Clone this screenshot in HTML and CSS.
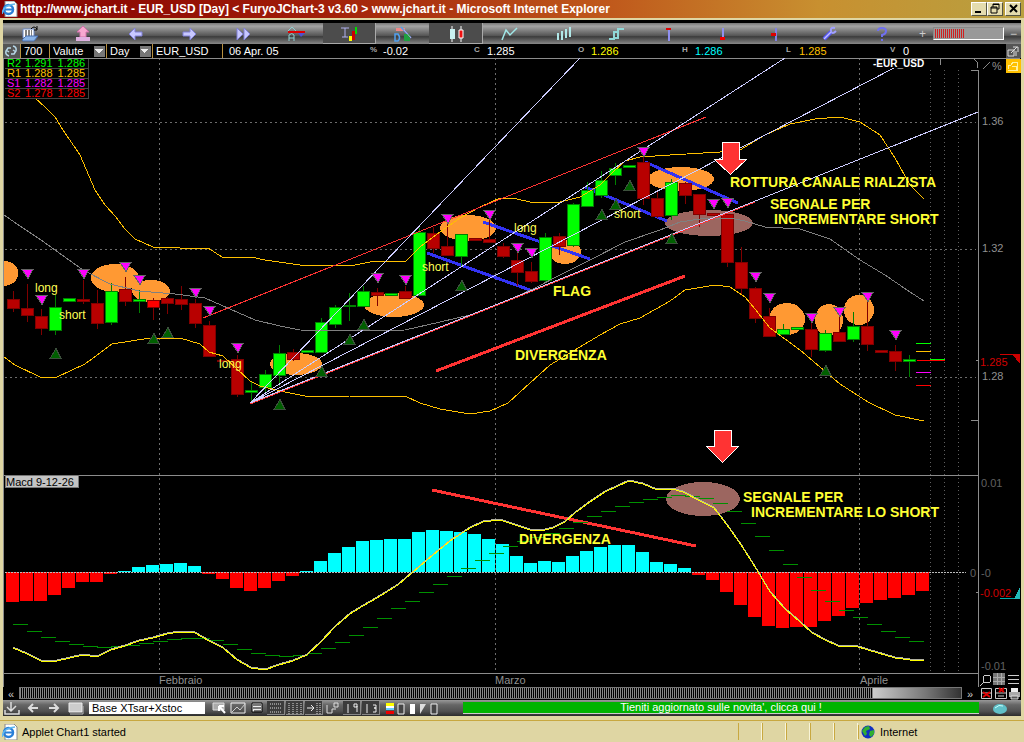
FILE: index.html
```html
<!DOCTYPE html>
<html lang="it">
<head>
    <meta charset="UTF-8">
    <meta name="viewport" content="width=device-width, initial-scale=1.0">
    <title>FuryoJChart-3</title>
    <link rel="stylesheet" href="styles.css">
</head>
<body>
    <header class="titlebar">
        <svg class="ie" viewBox="0 0 16 16"><path d="M3 0h9l3 3v13H3z" fill="#fff" stroke="#888"/><circle cx="6.500" cy="8.500" r="4.500" fill="none" stroke="#2a7fd8" stroke-width="2.500"/><path d="M3 8.500h8" stroke="#2a7fd8" stroke-width="2"/><path d="M0 13Q1 4 13 3" fill="none" stroke="#60b8f0" stroke-width="1.500"/></svg>
        <h1>http://www.jchart.it - EUR_USD [Day] &lt; FuryoJChart-3 v3.60 &gt; www.jchart.it - Microsoft Internet Explorer</h1>
        <div class="winbtns">
            <button aria-label="Riduci"><svg viewBox="0 0 14 12"><path d="M3 9h6" stroke="#000" stroke-width="2"/></svg></button>
            <button aria-label="Ripristina"><svg viewBox="0 0 14 12"><path d="M5 4V1h6v5H9M5 1.500h6M3 4h6v6H3zM3 5h6" fill="none" stroke="#000"/></svg></button>
            <button class="close" aria-label="Chiudi"><svg viewBox="0 0 14 12"><path d="M4 2l7 7M11 2l-7 7" stroke="#000" stroke-width="2"/></svg></button>
        </div>
    </header>

    <main class="applet">
        <nav class="toolbar">
            <button aria-label="Apri"><svg viewBox="0 0 18 16"><path d="M2 3h11v9H2z" fill="#fff" stroke="#6a8ac8"/><path d="M4 5h7M4 7h7M4 9h7" stroke="#000" stroke-dasharray="2 1"/><path d="M1 14l4-4h12l-4 5H2z" fill="#8ab4e8" stroke="#4a70b0"/><path d="M10 3q3-4 6 0M16 0v4h-3" fill="none" stroke="#000"/></svg></button>
            <button aria-label="Su"><svg viewBox="0 0 18 16"><path d="M9 0l6 6h-3v5H6V6H3z" fill="#f8a8d0" stroke="#d070a8"/><path d="M2 11h14v4H2z" fill="#e0b0e0"/></svg></button>
            <button aria-label="Indietro"><svg viewBox="0 0 18 16"><path d="M2 8l6-6v4h7v4H8v4z" fill="#c8c8ff" stroke="#8080d8"/></svg></button>
            <button aria-label="Avanti"><svg viewBox="0 0 18 16"><path d="M15 8L9 2v4H2v4h7v4z" fill="#c8c8ff" stroke="#8080d8"/></svg></button>
            <button aria-label="Fine"><svg viewBox="0 0 18 16"><path d="M3 2l6 6-6 6zM10 2l6 6-6 6z" fill="#c8c8ff" stroke="#8080d8"/></svg></button>
            <button aria-label="Alfabetico"><svg viewBox="0 0 18 16"><path d="M1 5l4-4 4 4M2 15V9q3-3 5 0v6M2 12h5" fill="none" stroke="#90d0d0"/><path d="M1 6h17" stroke="#e00000" stroke-width="2"/><path d="M11 7l3 4 4-4z" fill="#5050d0"/></svg></button>
            <button class="on" aria-label="Trading"><svg viewBox="0 0 18 16"><path d="M1 2h8M5 2v9M2 11h6" stroke="#b0b0f0"/><path d="M9 10h3v5H9z" fill="#ff0"/><path d="M12 5h3v9h-3z" fill="#c00"/><path d="M15 1h2v7h-2z" fill="#0d0"/></svg></button>
            <button aria-label="Disegno"><svg viewBox="0 0 18 16"><path d="M2 2h9v3H2z" fill="#e88"/><path d="M1 8v7h3q3-3 0-7zM7 1l10 11" fill="none" stroke="#50a0f0" stroke-width="1.500"/><path d="M10 8h6v7h-6z" fill="#20a040"/><path d="M10 4l7 8" stroke="#c0a0e0"/></svg></button>
            <button class="on" aria-label="Candele"><svg viewBox="0 0 18 16"><path d="M5 0v16M14 0v16" stroke="#fff"/><path d="M3 3h5v10H3z" fill="#c8f0f0"/><path d="M12 4h4v8h-4z" fill="#f01010" stroke="#fff"/></svg></button>
            <button aria-label="Linea"><svg viewBox="0 0 18 16"><path d="M2 14L6 4l4 5 7-7" fill="none" stroke="#a0e8e8" stroke-width="1.500"/></svg></button>
            <button aria-label="Barre"><svg viewBox="0 0 18 16"><path d="M4 7v7M8 5v9M12 3v9M16 1v10" stroke="#b0e8e8" stroke-width="2"/></svg></button>
            <button aria-label="Gradini"><svg viewBox="0 0 18 16"><path d="M2 13h5V6h5M8 12h3V3h6" fill="none" stroke="#90d8d8" stroke-width="2"/></svg></button>
            <button aria-label="Marca alto"><svg viewBox="0 0 18 16"><path d="M9 4v11" stroke="#9090f0" stroke-width="2"/><path d="M6 2h5v2H6z" fill="#d00"/></svg></button>
            <button aria-label="Marca basso"><svg viewBox="0 0 18 16"><path d="M9 2v10" stroke="#9090f0" stroke-width="2"/><path d="M6 11h5v3H6z" fill="#e00"/></svg></button>
            <button aria-label="Marca medio"><svg viewBox="0 0 18 16"><path d="M9 2v13" stroke="#8080e0" stroke-width="2"/><path d="M4 7h5v3H4z" fill="#d00"/></svg></button>
            <button aria-label="Strumenti"><svg viewBox="0 0 18 16"><path d="M4 13l7-7" stroke="#5858f0" stroke-width="4"/><path d="M4 13l7-7" stroke="#c0c0ff" stroke-width="1.500"/><path d="M15 2q-5-1-4 3 1 4 5 0" fill="none" stroke="#a0a0ff" stroke-width="2"/></svg></button>
            <button aria-label="Aiuto"><svg viewBox="0 0 18 16"><path d="M5 5q0-3 4-3t4 3-4 4v2M9 13v2" fill="none" stroke="#7070f0" stroke-width="2"/></svg></button>
            <div class="zoombar">
                <button aria-label="Ingrandisci">+</button>
                <input type="range" min="0" max="100" value="43" aria-label="Zoom">
                <button aria-label="Rimpicciolisci">−</button>
            </div>
        </nav>

        <form class="info">
            <div class="pick">
                <button type="button" class="cycle" aria-label="Aggiorna"><svg viewBox="0 0 16 14"><path d="M6 12q-4-1-3-5l2-3h3M10 2q4 1 3 5l-2 3H8M3 6l3 2M13 8l-3-2" fill="none" stroke="#b8d8e8" stroke-width="1.500"/></svg></button>
                <input class="bars" type="text" value="700" aria-label="Barre">
                <select class="market" aria-label="Mercato"><option>Valute</option></select>
                <select class="period" aria-label="Periodo"><option>Day</option></select>
                <input class="ticker" type="text" value="EUR_USD" aria-label="Titolo">
                <span class="date">06 Apr. 05</span>
            </div>
            <div class="quotes">
                <span><b>%</b>-0.02</span>
                <span><b>C</b>1.285</span>
                <span class="yellow"><b>O</b>1.286</span>
                <span class="cyan"><b>H</b>1.286</span>
                <span class="gold"><b>L</b>1.285</span>
                <span><b>V</b>0</span>
            </div>
            <button type="button" class="detach" aria-label="Stacca"><svg viewBox="0 0 14 13"><path d="M2 5h6v6H2zM5 8l6-6M7 2h5v5M10 6v5" fill="none" stroke="#ddd"/></svg></button>
        </form>

        <section class="chart">
            <table class="levels">
                <tr class="r2"><td>R2</td><td>1.291</td><td>1.286</td></tr>
                <tr class="r1"><td>R1</td><td>1.288</td><td>1.285</td></tr>
                <tr class="s1"><td>S1</td><td>1.282</td><td>1.285</td></tr>
                <tr class="s2"><td>S2</td><td>1.278</td><td>1.285</td></tr>
            </table>
            <svg class="plot" viewBox="3 58 1018 629">
                <!-- griglia -->
                <g class="grid">
                    <path d="M5 122.500H976M5 249.500H976M5 377.500H976M159.500 58V673M495.500 58V673M859.500 58V673"/>
                    <path class="future" d="M930.500 70V673M944.500 70V673M958.500 70V673"/>
                </g>
                <g class="frame">
                    <path d="M3.500 58V687M3 58.500H1020M978.500 70V687M3 475.500H979M3 673.500H979M3 687H979M971 70.500h8M971 420.500h8M940.500 59v6M976 360.500h3M976 592.500h3M974 59q4 2 4 9"/>
                </g>

                <!-- zone evidenziate -->
                <g class="spots">
                    <path d="M4 261Q18 262 18 273T4 286z"/>
                    <ellipse cx="115" cy="278" rx="24" ry="14"/>
                    <ellipse cx="151" cy="291" rx="19" ry="11"/>
                    <ellipse cx="296" cy="364" rx="26" ry="11"/>
                    <ellipse cx="394" cy="305" rx="30" ry="12"/>
                    <ellipse cx="468" cy="228" rx="28" ry="13"/>
                    <ellipse cx="565" cy="252" rx="16" ry="12"/>
                    <ellipse cx="681" cy="179" rx="33" ry="12"/>
                    <ellipse cx="787" cy="319" rx="18" ry="16"/>
                    <ellipse cx="829" cy="320" rx="14" ry="16"/>
                    <ellipse cx="859" cy="310" rx="15" ry="15"/>
                    <ellipse class="brown" cx="709" cy="223" rx="44" ry="13"/>
                    <ellipse class="brown" cx="703" cy="499" rx="37" ry="17"/>
                </g>

                <g id="bars"></g>
                <path class="zero" d="M5 572.500H966"/>
                <path class="blue" d="M427 253L530 290M483 222L590 259M585 187L667 221M645 162L738 203"/>
                <g id="candles"></g>

                <!-- bande e media -->
                <polyline class="band" points="35,98 45,107 55,117 63,130 80,155 95,190 105,205 116,217 125,229 135,239 153,247 180,248 208,248 222,257 235,258 251,257 265,260 300,265 320,265 350,266 375,261 406,261 420,247 440,232 460,218 480,207 500,198 512,198 535,203 560,202 580,197 600,185 613,172 625,161 640,157 670,155 720,152 740,150 755,141 765,135 790,124 815,119 840,117 860,122 880,135 895,158 910,185 924,199"/>
                <polyline class="band" points="4,357 15,365 40,377 57,377 85,364 112,344 150,338 180,338 200,344 209,352 223,356 237,369 250,381 260,386 285,392 310,397 350,396 405,396 420,403 440,409 470,414 490,411 508,403 530,383 550,365 575,350 600,335 620,324 640,318 670,301 685,290 715,285 730,287 745,297 755,309 770,328 800,350 840,384 868,402 895,415 924,421"/>
                <polyline class="mean" points="4,215 20,226 41,240 55,250 83,270 110,284 139,291 175,294 205,298 230,309 255,320 280,326 300,330 350,331 405,330 440,322 470,315 500,304 535,288 560,275 590,260 625,242 660,230 680,222 700,219 730,218 745,221 765,227 800,229 830,239 860,260 885,275 910,292 924,301"/>

                <!-- ventaglio -->
                <path class="trend" d="M203 318L706 117M250 404L755 202"/>
                <path class="fan" d="M250 403L580 58M250 403L785 58M250 403L894 68M250 403L978 112"/>
                <path class="red" d="M436 371L685 276M432 490L696 546"/>

                <g id="marks"></g>
                <g class="arrows">
                    <path d="M722.500 142.500h17v17h7l-16 15-16-15h8z"/>
                    <path d="M714.500 430.500h17v16h7l-16 16-16-16h8z"/>
                </g>

                <!-- livelli sull'ultima barra -->
                <path stroke="#0f0" d="M916 343.500h15M930 359.500h15"/>
                <path stroke="#ffc000" d="M916 351.500h15"/>
                <path stroke="#f0f" d="M916 372.500h15"/>
                <path stroke="#f00" d="M916 385.500h15M917 360.500h28"/>

                <g id="signal"></g>
                <polyline class="macd shade" points="13,647 27,653 41,660 57,660 70,657 83,654 97,656 111,649 125,645 139,640 153,637 167,633 180,631 195,632 209,640 223,647 237,659 251,667 265,669 279,664 293,660 307,654 321,641 335,626 350,613 363,605 377,597 398,584 412,572 433,554 450,540 470,527 483,521 500,519 518,525 533,530 545,529 553,527 565,521 575,512 590,501 605,491 629,480 643,483 657,489 672,488 683,491 700,500 714,507 727,524 741,544 755,566 770,591 785,608 800,621 812,632 825,639 838,645 855,645 868,649 895,657 910,659 924,660"/>
                <polyline class="macd" points="13,648 27,654 41,661 57,661 70,658 83,655 97,657 111,650 125,646 139,641 153,638 167,634 180,632 195,633 209,641 223,648 237,660 251,668 265,670 279,665 293,661 307,655 321,642 335,627 350,614 363,606 377,598 398,585 412,573 433,555 450,541 470,528 483,522 500,520 518,526 533,531 545,530 553,528 565,522 575,513 590,502 605,492 629,481 643,484 657,490 672,489 683,492 700,501 714,508 727,525 741,545 755,567 770,592 785,609 800,622 812,633 825,640 838,646 855,646 868,650 895,658 910,660 924,661"/>

                <g class="small">
                    <text x="35" y="292">long</text>
                    <text x="59" y="319">short</text>
                    <text x="219" y="368">long</text>
                    <text x="422" y="271">short</text>
                    <text x="514" y="232">long</text>
                    <text x="614" y="218">short</text>
                </g>
                <g class="note">
                    <text x="730" y="187">ROTTURA CANALE RIALZISTA</text>
                    <text x="770" y="209">SEGNALE PER</text>
                    <text x="774" y="224">INCREMENTARE SHORT</text>
                    <text x="553" y="296">FLAG</text>
                    <text x="515" y="360">DIVERGENZA</text>
                    <text x="519" y="544">DIVERGENZA</text>
                    <text x="743" y="502">SEGNALE PER</text>
                    <text x="751" y="517">INCREMENTARE LO SHORT</text>
                </g>
                <g class="axis">
                    <text x="982" y="125">1.36</text>
                    <text x="982" y="252">1.32</text>
                    <text x="982" y="380">1.28</text>
                    <text class="now" x="980" y="366">1.285</text>
                    <text x="992" y="70">%</text>
                    <text class="dim" x="981" y="487">0.01</text>
                    <text class="dim" x="970" y="577">0</text>
                    <text class="dim" x="981" y="577">-0</text>
                    <text class="now" x="980" y="597">-0.002</text>
                    <text class="dim" x="981" y="670">-0.01</text>
                    <text x="159" y="684">Febbraio</text>
                    <text x="495" y="684">Marzo</text>
                    <text x="860" y="684">Aprile</text>
                </g>
                <text class="symbol" x="873" y="67">-EUR_USD</text>
                <path d="M5 475.500h73v12H5z" fill="#c4c4c4" stroke="#777"/>
                <text class="tag" x="6" y="486">Macd 9-12-26</text>

                <path d="M1000 354.500h13" stroke="#c00"/><path d="M1012 354h8v10z" fill="#c00"/>
                <path d="M1000 598.500h15" stroke="#0aa"/><path d="M1020 587v12h-6z" fill="#2bb"/>
                <path d="M983 69l7-7" stroke="#888"/>
                <path d="M1006 59h15v14h-15z" fill="#ffc000"/>
                <path d="M1008 69v-4h3l2-3h4v8h-9M1012 66h4v4" fill="none" stroke="#fff0a0"/>
                <g fill="none" stroke="#ccc"><circle cx="987" cy="679" r="4"/><path d="M984 682l-4 4M1008 675.500h11M1008 679.500h11M1008 683.500h11"/></g>
                <path d="M993 673h12v12h-12z" fill="#777"/><path d="M993 677h12M993 681h12M997 673v12M1001 673v12" stroke="#aaa"/>
            </svg>
        </section>

        <div class="scroller">
            <button aria-label="Inizio">«</button>
            <input type="range" min="0" max="100" value="100" aria-label="Scorri">
            <button aria-label="Fine">»</button>
            <svg class="tools" viewBox="0 0 43 13"><g fill="none" stroke="#ccc"><path d="M3.500 1.500h10v10h-10zM17.500 1.500h11v10h-11z"/><path d="M4 6h9M18 6h10M20 9h6" /></g><path d="M5 5l7 5M12 5l-7 5M21 1l5 4M26 1l-5 4" stroke="#e00000" stroke-width="2"/><path d="M33 1h7v4h-7z" fill="#eee"/><path d="M31 5h11v5H31z" fill="#aaa"/><path d="M33 9h7v3h-7z" fill="#555" stroke="#ddd"/></svg>
        </div>

        <div class="bottom">
            <div class="nav">
                <button aria-label="Salva"><svg viewBox="0 0 18 14"><path d="M2 9v4h14V9M8 1v9M4 6l4 4 5-5" fill="none" stroke="#ddd" stroke-width="1.500"/></svg></button>
                <button aria-label="Precedente"><svg viewBox="0 0 18 14"><path d="M14 7H6M9 3L5 7l4 4" fill="none" stroke="#ddd" stroke-width="2"/></svg></button>
                <button aria-label="Successivo"><svg viewBox="0 0 18 14"><path d="M4 7h8M9 3l4 4-4 4" fill="none" stroke="#ddd" stroke-width="2"/></svg></button>
                <button aria-label="Finestra"><svg viewBox="0 0 18 14"><path d="M3 2h13v9H3z" fill="#ccc" stroke="#eee"/><path d="M4 13h13V5" fill="none" stroke="#bbb"/></svg></button>
            </div>
            <input class="preset" type="text" value="Base XTsar+Xstoc" aria-label="Modello">
            <div class="opts">
                <button aria-label="Applica"><svg viewBox="0 0 18 14"><path d="M3 2h11v7H3z" fill="#aaa" stroke="#ddd"/><path d="M9 5l6 7M9 5v5M9 5h5" stroke="#fff" stroke-width="2"/></svg></button>
                <button aria-label="Modifica"><svg viewBox="0 0 18 14"><path d="M2 2h14v10H2z" fill="none" stroke="#eee"/><path d="M3 11l5-5 3 3 5-6" fill="none" stroke="#ccc"/></svg></button>
                <button aria-label="Stampa"><svg viewBox="0 0 18 14"><path d="M4 2h10v9H4z" fill="#eee" stroke="#000"/><path d="M5 4h8M5 7h8M6 10h7" stroke="#000"/></svg></button>
                <button class="on" aria-label="Righe"><svg viewBox="0 0 18 14"><path d="M3 3h12M3 7h12M3 11h12" stroke="#ddd" stroke-dasharray="1 1"/></svg></button>
                <button class="on" aria-label="Colonne"><svg viewBox="0 0 18 14"><path d="M3 2v11M7 2v11M11 2v11M15 2v11" stroke="#ddd" stroke-dasharray="1 1"/></svg></button>
                <button class="on" aria-label="Cursore"><svg viewBox="0 0 18 14"><path d="M2 7h7M6 4l3 3-3 3" fill="none" stroke="#eee"/><path d="M12 2v11M15 2v11" stroke="#ddd" stroke-dasharray="1 1"/></svg></button>
                <button aria-label="Scala"><svg viewBox="0 0 18 14"><path d="M3 4v8h5V8h4M10 2h4v4h-4z" fill="none" stroke="#ddd"/></svg></button>
                <button class="on" aria-label="Valori"><svg viewBox="0 0 18 14"><path d="M5 3v9M11 3h3v3h-3zM14 5v6" fill="none" stroke="#eee"/></svg></button>
                <button class="on" aria-label="Date"><svg viewBox="0 0 18 14"><path d="M5 3v9M11 4h3v3h-2 2v4h-3" fill="none" stroke="#eee"/></svg></button>
            </div>
            <svg class="swatches" viewBox="0 0 54 14"><path d="M2 2h8v3H2z" fill="#ff0"/><path d="M2 5h8v3H2z" fill="#fff"/><path d="M2 7h8v2H2z" fill="#6cf"/><path d="M2 10h8v3H2z" fill="#e00"/><path d="M14 3h6v10h-6zM47 3h6v10h-6z" fill="#444" stroke="#eee"/><path d="M26 3h5v10h-5z" fill="#fff"/><path d="M36 13V3h6z" fill="#ddd"/></svg>
            <a class="news" href="#">Tieniti aggiornato sulle novita', clicca qui !</a>
            <svg class="gem" viewBox="0 0 42 14"><ellipse cx="21" cy="8" rx="7" ry="5" fill="#60c0c8"/><path d="M16 7q4-4 8-2" stroke="#c8ffff" fill="none"/></svg>
        </div>
    </main>

    <footer class="status">
        <svg class="ie" viewBox="0 0 16 16"><path d="M3 0h9l3 3v13H3z" fill="#fff" stroke="#888"/><circle cx="6.500" cy="8.500" r="4.500" fill="none" stroke="#2a7fd8" stroke-width="2.500"/><path d="M3 8.500h8" stroke="#2a7fd8" stroke-width="2"/><path d="M0 13Q1 4 13 3" fill="none" stroke="#60b8f0" stroke-width="1.500"/></svg>
        <span class="msg">Applet Chart1 started</span>
        <i></i><i></i><i></i><i></i><i></i>
        <div class="zone">
            <svg viewBox="0 0 14 14"><circle cx="7" cy="7" r="6.500" fill="#1030c0"/><path d="M1 6l3-4 4-1 1 3-4 2 1 3-2 2zM9 6l4-1v4l-3 3-2-2z" fill="#30b030"/></svg>
            <span>Internet</span>
        </div>
    </footer>

    <script src="script.js"></script>
</body>
</html>
```
FILE: styles.css
```css
body{
    margin: 0;
    min-height: 100vh;
    display: flex;
    flex-direction: column;
    background-color: #dfd6a3;
    font-family: "Liberation Sans", Arial, Helvetica, sans-serif;
    font-size: 11px;
    color: white;
}
button{
    margin: 0;
    padding: 0;
    border: 0;
    background: none;
    color: inherit;
    font: inherit;
}
input, select{
    margin: 0;
    padding: 0;
    border: 0;
    border-radius: 0;
    box-sizing: border-box;
    background-color: transparent;
    color: inherit;
    font: inherit;
    min-width: 0;
}
svg{
    display: block;
}

/* barra del titolo */
.titlebar{
    display: flex;
    align-items: center;
    gap: 2px;
    height: 18px;
    padding: 0 3px 0 2px;
    border-bottom: 2px solid #dfd6a3;
    background: linear-gradient(to right, #840000, #a01c08 30%, #c05a1c 60%, #c89030 80%, #b8a040);
}
.ie{
    width: 16px;
    height: 16px;
}
h1{
    flex: 1;
    margin: 0;
    font-size: 12px;
    white-space: nowrap;
    overflow: hidden;
}
.winbtns{
    display: flex;
}
.winbtns button{
    width: 16px;
    height: 14px;
    box-sizing: border-box;
    background-color: #e4dcae;
    border: 1px solid;
    border-color: #fff #554 #554 #fff;
}
.winbtns .close{
    margin-left: 2px;
}

/* applet */
.applet{
    margin: 0 3px;
    background-color: black;
    padding-top: 3px;
}
.toolbar{
    display: flex;
    height: 21px;
    background: linear-gradient(#777, #a4a4a4 15%, #555 60%, #3c3c3c 65%, #888);
}
.toolbar > button{
    flex: 1;
    display: flex;
    align-items: center;
    justify-content: center;
}
.toolbar > button svg{
    width: 18px;
    height: 16px;
}
.toolbar .on{
    background-color: #4c4c4c;
    box-shadow: inset -1px -1px 0 #aaa;
}
.zoombar{
    display: flex;
    align-items: center;
    justify-content: space-between;
    width: 112px;
    padding: 0 4px 0 10px;
    box-sizing: border-box;
    font-size: 12px;
    color: #ccc;
}
.zoombar input{
    appearance: none;
    width: 71px;
    height: 13px;
    border: 1px solid;
    border-color: #888 #fff #fff #888;
    background: repeating-linear-gradient(to right, #d02020 0, #d02020 1px, #999 1px, #999 2px) 1px 1px / 30px 9px no-repeat #999;
}
.zoombar input::-webkit-slider-thumb{
    appearance: none;
    width: 1px;
    height: 9px;
}

/* riga quotazioni */
.info{
    display: flex;
    height: 14px;
    line-height: 14px;
    white-space: nowrap;
}
.pick{
    display: flex;
    width: 367px;
}
.cycle{
    width: 17px;
    background-color: #555;
}
.cycle svg{
    width: 16px;
    height: 14px;
}
.bars, .ticker, .market, .period{
    border-left: 1px solid #b89040;
    padding-left: 3px;
}
.bars{
    width: 29px;
}
/* freccia del menu */
.market, .period{
    appearance: none;
    background-image: linear-gradient(45deg, transparent 50%, #eee 50%), linear-gradient(-45deg, transparent 50%, #eee 50%), linear-gradient(#777, #777);
    background-size: 4px 4px, 4px 4px, 11px 11px;
    background-position: right 7px top 5px, right 3px top 5px, right 1px top 2px;
    background-repeat: no-repeat;
}
.market{
    width: 57px;
}
.period{
    width: 46px;
}
.ticker{
    width: 70px;
}
.date{
    border-left: 1px solid #b89040;
    padding-left: 6px;
}
.quotes{
    flex: 1;
    display: grid;
    grid-template-columns: repeat(6, 1fr);
    margin-right: 12px;
}
.quotes b{
    display: inline-block;
    width: 13px;
    font-size: 8px;
    line-height: 11px;
    vertical-align: top;
    color: #aaa;
}
.yellow{
    color: #ff0;
}
.cyan{
    color: #0ff;
}
.gold{
    color: #ffc000;
}
.detach{
    width: 15px;
    background-color: #555;
}
.detach svg{
    width: 14px;
    height: 13px;
}

/* grafico */
.chart{
    position: relative;
}
.plot{
    width: 100%;
    height: auto;
    shape-rendering: crispEdges;
}
.levels{
    position: absolute;
    left: 2px;
    top: 1px;
    border-collapse: collapse;
    line-height: 9px;
    background-color: black;
}
.levels td{
    padding: 0 2px;
    height: 9px;
    border-bottom: 1px solid #444;
}
.levels td:last-child{
    padding: 0 3px;
    border-right: 1px solid #444;
}
.r2{
    color: #0f0;
}
.r1{
    color: #ffc000;
}
.s1{
    color: #f0f;
}
.s2{
    color: #f00;
}
.grid path{
    stroke: #6c6c6c;
    stroke-dasharray: 2 3;
}
.grid .future{
    stroke: #606060;
    stroke-dasharray: 1 3;
}
.frame path{
    fill: none;
    stroke: #8c8c8c;
}
.spots{
    fill: #ff9933;
}
.brown{
    fill: #9c6660;
}
.zero{
    stroke: #bbb;
    stroke-dasharray: 2 1;
}
.blue{
    stroke: #3333f4;
    stroke-width: 3px;
}
.red{
    stroke: #ff3333;
    stroke-width: 3px;
}
.band, .mean, .macd{
    fill: none;
    stroke: #ffc000;
}
.mean{
    stroke: #808080;
}
.macd{
    stroke: #ff0;
}
.macd.shade{
    stroke: #b0b0a0;
}
.trend{
    stroke: #ff3333;
}
.fan{
    stroke: #ccccff;
}
.up{
    fill: #0f0;
    stroke: #008000;
}
.down{
    fill: #b80000;
    stroke: #800000;
}
.bright{
    fill: #f00;
}
.mark-down{
    fill: #f0f;
    stroke: #666;
}
.mark-up{
    fill: #006000;
    stroke: #3c503c;
}
.pos{
    fill: #0ff;
}
.neg{
    fill: #f00;
}
#signal{
    stroke: #009000;
}
.arrows{
    fill: #ff3333;
    stroke: white;
}
.small{
    fill: #ffff55;
    font-size: 12px;
}
.note{
    fill: #ffff33;
    font-size: 14px;
    font-weight: bold;
}
.axis{
    fill: #909090;
}
.axis .dim{
    fill: #606060;
}
.axis .now{
    fill: #d00000;
}
.symbol{
    fill: white;
    font-size: 10px;
    font-weight: bold;
}
.tag{
    fill: black;
}

/* scorrimento */
.scroller{
    display: flex;
    height: 13px;
    line-height: 12px;
    color: #ccc;
}
.scroller button{
    width: 16px;
}
.scroller input{
    appearance: none;
    flex: 1;
    height: 12px;
    border: 1px solid #777;
    background: repeating-linear-gradient(to right, #888 0, #888 1px, #000 1px, #000 2px);
}
.scroller input::-webkit-slider-thumb{
    appearance: none;
    width: 88px;
    height: 10px;
    background: linear-gradient(to right, #ccc, #777 60%, #333);
}
.tools{
    width: 43px;
    height: 13px;
}

/* barra inferiore */
.bottom{
    display: flex;
    align-items: center;
    height: 16px;
    background: linear-gradient(#999, #666 30%, #505050 70%, #2c2c2c);
}
.nav, .opts{
    display: flex;
}
.nav{
    gap: 3px;
}
.nav button, .opts button{
    width: 18px;
    height: 14px;
}
.nav svg, .opts svg{
    width: 18px;
    height: 14px;
}
.preset{
    width: 116px;
    height: 12px;
    margin: 0 5px;
    padding-left: 3px;
    background-color: white;
    color: black;
}
.opts{
    gap: 1px;
}
.opts .on{
    background-color: #3c3c3c;
    box-shadow: inset -1px -1px 0 #888;
}
.swatches{
    width: 54px;
    height: 14px;
    margin: 0 25px 0 4px;
}
.news{
    flex: 1;
    height: 11px;
    line-height: 11px;
    text-align: center;
    text-decoration: none;
    background-color: #00b400;
    border-bottom: 1px solid #ccc;
    color: white;
}
.gem{
    width: 42px;
    height: 14px;
}

/* barra di stato */
.status{
    display: flex;
    align-items: center;
    height: 22px;
    margin-top: 4px;
    border-top: 1px solid #c8a840;
    padding-left: 2px;
    box-sizing: border-box;
    color: black;
}
.msg{
    flex: 1;
    margin-left: 4px;
}
.status i{
    width: 22px;
    height: 17px;
    border-left: 1px solid #c8a840;
    border-right: 1px solid #f8f4d8;
}
.zone{
    display: flex;
    align-items: center;
    gap: 5px;
    width: 163px;
    padding-left: 2px;
    border-left: 1px solid #c8a840;
}
.zone svg{
    width: 14px;
    height: 14px;
}
```
FILE: script.js
```js
var ns = 'http://www.w3.org/2000/svg'
var passo = 14 // distanza tra due barre

function disegna(id, tag, classe, attr) {
    var el = document.createElementNS(ns, tag)
    el.setAttribute('class', classe)
    for (var k in attr) {
        el.setAttribute(k, attr[k])
    }
    document.getElementById(id).appendChild(el)
}

// tipo, corpo alto, corpo basso, massimo, minimo
var candele = [
    ['down',299,308,291,312], ['down',308,315,284,322], ['down',316,328,309,335], ['up',307,330,295,335],
    ['up',298,301,298,301], ['down',299,301,280,304], ['down',303,323,290,329], ['up',291,322,283,325],
    ['down',289,301,277,306], ['up',299,301,290,313], ['down bright',300,307,298,320], ['down',298,303,297,314],
    ['down',299,304,286,310], ['down',303,323,299,328], ['down',325,356,321,357], ['down',360,361,360,361],
    ['down',359,394,355,397], ['up',390,392,382,402], ['up',374,387,370,395], ['up',353,375,345,386],
    ['down',352,359,349,361], ['up',350,352,350,352], ['up',322,352,318,352], ['up',307,324,305,328],
    ['up',305,306,293,321], ['up',291,306,286,306], ['down',292,295,288,306], ['up',293,295,293,295],
    ['down',291,298,286,299], ['up',232,295,228,296], ['down',233,248,227,253], ['down',246,255,223,255],
    ['up',234,256,234,267], ['down',238,240,238,240], ['down',239,242,218,242], ['down',246,256,243,258],
    ['down',260,272,253,286], ['down',271,281,262,283], ['up',237,280,233,283], ['down',236,246,233,255],
    ['up',204,245,203,247], ['up',190,206,182,207], ['up',180,195,171,198], ['up',168,175,163,185],
    ['up',165,167,165,167], ['down',162,198,157,205], ['down',198,216,190,218], ['up',182,215,179,220],
    ['down',183,195,182,204], ['down',194,214,194,227], ['down',213,215,213,215], ['down',214,262,212,267],
    ['down',262,288,247,295], ['down',288,318,287,323], ['down',316,336,308,336], ['up',329,334,324,334],
    ['up',327,329,327,329], ['down',329,349,323,357], ['up',333,350,330,352], ['down',332,341,313,341],
    ['up',326,339,312,342], ['down',326,344,297,351], ['down',350,352,350,352], ['down',351,361,345,371],
    ['up',359,361,355,377]
]

for (var i = 0; i < candele.length; i++) {
    var c = candele[i]
    var x = 13 + i * passo
    disegna('candles', 'path', c[0], {d: `M${x + 0.5} ${c[3]}V${c[4]}`})
    disegna('candles', 'rect', c[0], {x: x - 5.5, y: c[1] + 0.5, width: 12, height: c[2] - c[1]})
}

// istogramma macd
var istogramma = [602,601,601,595,588,582,582,574,571,567,565,564,563,566,574,579,588,591,588,581,576,571,561,553,
    547,541,540,539,539,532,530,531,532,534,539,544,556,563,561,562,556,551,547,545,545,552,562,564,568,575,
    580,592,605,617,626,628,627,627,621,616,608,603,600,598,595,591]

for (var i = 0; i < istogramma.length; i++) {
    var y = istogramma[i]
    if (y < 572) {
        disegna('bars', 'rect', 'pos', {x: 6 + i * passo, y: y, width: 13, height: 572 - y})
    } else {
        disegna('bars', 'rect', 'neg', {x: 6 + i * passo, y: 572, width: 13, height: y - 572})
    }
}

// linea di segnale
var segnale = [624,631,637,641,644,646,647,646,645,643,641,639,638,638,640,644,649,653,655,656,655,653,648,642,
    635,627,618,608,601,592,584,576,568,560,553,546,541,537,533,528,522,516,511,506,502,499,497,495,496,498,
    503,511,523,536,550,564,577,590,601,610,617,624,631,637,641]

for (var i = 0; i < segnale.length; i++) {
    disegna('signal', 'path', 'dash', {d: `M${13 + i * passo} ${segnale[i] + 0.5}h15`})
}

// triangoli di ingresso e uscita
var giu = [[27,269],[83,269],[41,295],[125,262],[139,275],[195,288],[209,306],[237,343],[377,273],[405,275],
    [447,214],[489,210],[517,243],[531,248],[643,147],[713,199],[727,198],[755,272],[769,293],[811,313],
    [839,307],[867,292],[895,330]]
var su = [[55,348],[153,333],[167,327],[279,399],[321,366],[349,334],[363,319],[461,280],[601,209],[615,199],
    [629,180],[671,233],[825,365]]

giu.forEach(function (p) {
    disegna('marks', 'path', 'mark-down', {d: `M${p[0] - 5} ${p[1] + 0.5}h11l-5 9z`})
})
su.forEach(function (p) {
    disegna('marks', 'path', 'mark-up', {d: `M${p[0] - 5} ${p[1] + 10.5}h11l-5 -10z`})
})
```
